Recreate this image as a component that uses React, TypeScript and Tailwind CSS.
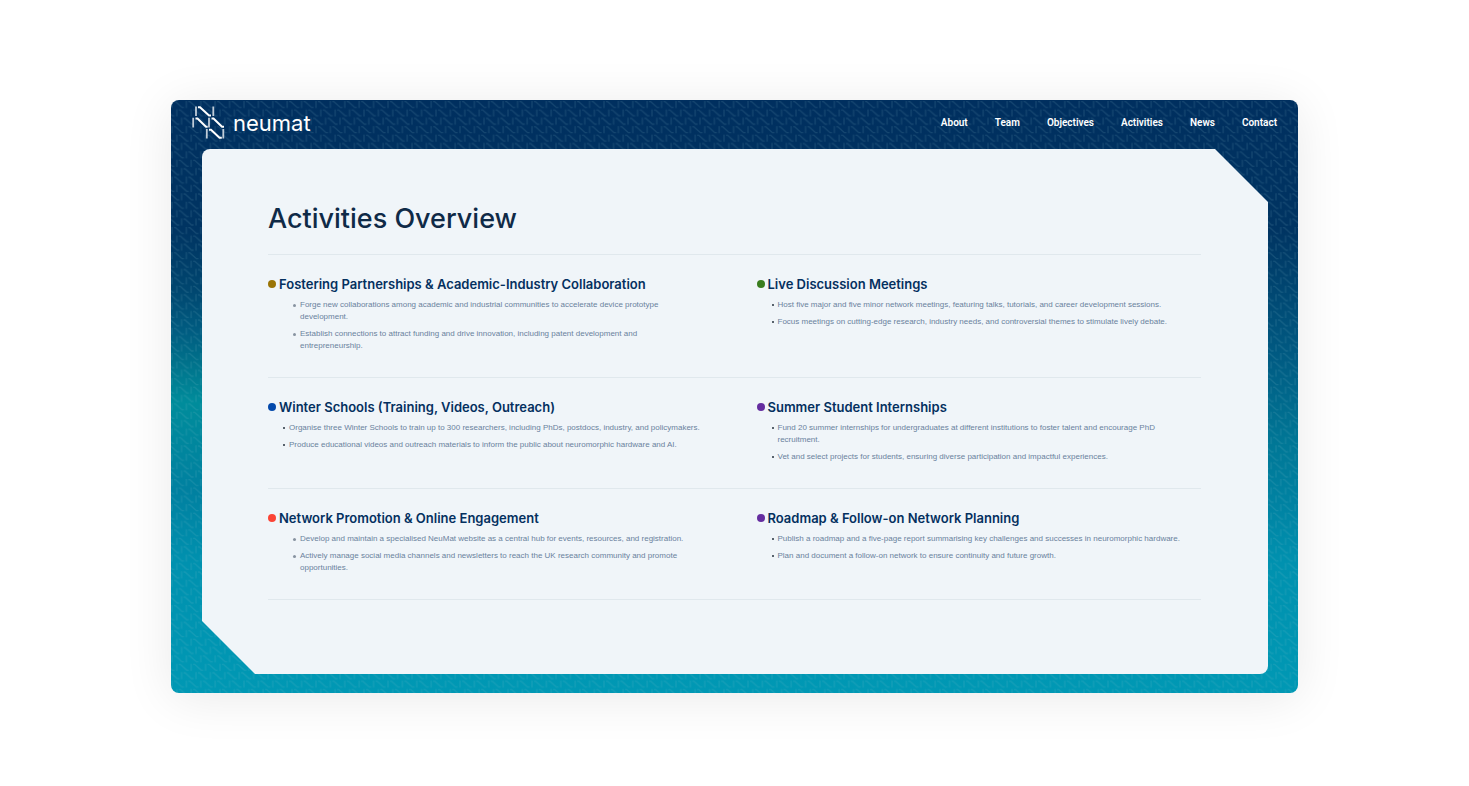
import clsx from "clsx"

const links = ["About", "Team", "Objectives", "Activities", "News", "Contact"]

const activities = [
  {
    title: "Fostering Partnerships & Academic-Industry Collaboration",
    dot: "bg-[#9a7406]",
    nested: true,
    items: [
      "Forge new collaborations among academic and industrial communities to accelerate device prototype development.",
      "Establish connections to attract funding and drive innovation, including patent development and entrepreneurship.",
    ],
  },
  {
    title: "Live Discussion Meetings",
    dot: "bg-[#3a7d1e]",
    items: [
      "Host five major and five minor network meetings, featuring talks, tutorials, and career development sessions.",
      "Focus meetings on cutting-edge research, industry needs, and controversial themes to stimulate lively debate.",
    ],
  },
  {
    title: "Winter Schools (Training, Videos, Outreach)",
    dot: "bg-[#0449ab]",
    items: [
      "Organise three Winter Schools to train up to 300 researchers, including PhDs, postdocs, industry, and policymakers.",
      "Produce educational videos and outreach materials to inform the public about neuromorphic hardware and AI.",
    ],
  },
  {
    title: "Summer Student Internships",
    dot: "bg-[#652da0]",
    items: [
      "Fund 20 summer internships for undergraduates at different institutions to foster talent and encourage PhD recruitment.",
      "Vet and select projects for students, ensuring diverse participation and impactful experiences.",
    ],
  },
  {
    title: "Network Promotion & Online Engagement",
    dot: "bg-[#fb4436]",
    nested: true,
    items: [
      "Develop and maintain a specialised NeuMat website as a central hub for events, resources, and registration.",
      "Actively manage social media channels and newsletters to reach the UK research community and promote opportunities.",
    ],
  },
  {
    title: "Roadmap & Follow-on Network Planning",
    dot: "bg-[#652da0]",
    items: [
      "Publish a roadmap and a five-page report summarising key challenges and successes in neuromorphic hardware.",
      "Plan and document a follow-on network to ensure continuity and future growth.",
    ],
  },
]

const rows = [activities.slice(0, 2), activities.slice(2, 4), activities.slice(4, 6)]

function Logo() {
  return (
    <a href="#" className="flex items-center gap-2 text-white">
      <svg width="33" height="33" viewBox="0 0 33 33" fill="none" stroke="currentColor" aria-hidden="true">
        {/* Bars */}
        <path
          d="M4 0.5V10M21.3 0.5V10M1.2 11.8V21.5M17 11.8V21.5M14.8 23V32.5M31.3 23V32.5"
          strokeWidth="1.8"
          opacity="0.75"
        />
        {/* Diagonals */}
        <path
          d="M6 1.2H8L17 9.4H19M3.5 12.5H5.5L14 20.8H15.7M19.5 12.5H21.5L30 20.8H32M17 23.7H19L27.5 31.8H29.8"
          strokeWidth="2"
        />
      </svg>
      <span className="text-[22px] leading-6">neumat</span>
    </a>
  )
}

function Pattern() {
  return (
    <svg className="absolute inset-0 h-full w-full" aria-hidden="true">
      <defs>
        <path id="n-mark" d="M1 1V8M3 1.6H4.5L11 7.4H13" />
        <pattern id="n-tile" width="14.4" height="25.2" patternUnits="userSpaceOnUse">
          <g fill="none" stroke="#8fc4cf" strokeWidth="1.3">
            {[0, 1, 2].map((row) => (
              <g key={row}>
                <use href="#n-mark" x={4.8 * row} y={8.4 * row} />
                <use href="#n-mark" x={4.8 * row - 14.4} y={8.4 * row} />
              </g>
            ))}
          </g>
        </pattern>
      </defs>
      <rect width="100%" height="100%" fill="url(#n-tile)" opacity="0.15" />
    </svg>
  )
}

export default function App() {
  return (
    <div className="min-h-screen bg-white px-[171px] pt-[100px] pb-[93px] font-['Inter',sans-serif]">
      <div className="relative overflow-hidden rounded-lg bg-[linear-gradient(180deg,#002f5f_0%,#003462_22%,#00466f_32%,#005c81_39%,#00708a_44%,#008c9b_51%,#0080a0_66%,#0091af_78%,#0098b4_100%),linear-gradient(180deg,#002f5f_0%,#003462_22%,#005a82_43%,#007796_58%,#0082a2_68%,#0091af_78%,#0098b4_100%)] bg-[length:50%_100%,100%_100%] bg-no-repeat shadow-[0_5px_50px_rgba(0,0,0,0.09)]">
        <Pattern />

        {/* Header */}
        <header className="relative flex h-[49px] items-center justify-between px-[21px] pb-1">
          <Logo />
          <nav className="flex gap-[27px] font-['Roboto',sans-serif]">
            {links.map((link) => (
              <a key={link} href="#" className="text-[10px] leading-4 font-semibold text-white">
                {link}
              </a>
            ))}
          </nav>
        </header>

        {/* Panel */}
        <main className="relative mr-[30px] mb-[19px] ml-[31px] rounded-lg bg-[#f0f5f9] pt-[52px] pr-[67px] pb-[74px] pl-[66px] [clip-path:polygon(0_0,calc(100%-53px)_0,100%_53px,100%_100%,53px_100%,0_calc(100%-53px))]">
          <h1 className="mb-[17px] text-[27px] leading-9 font-medium text-[#0f2a47]">Activities Overview</h1>

          <div className="divide-y divide-[#e0e8ed] border-y border-[#e0e8ed]">
            {rows.map((row, i) => (
              <div key={i} className="grid grid-cols-2 gap-11 pt-[21px] pb-[25px]">
                {row.map((activity) => (
                  <section key={activity.title}>
                    <h2 className="flex items-center gap-[3px] text-[13px] leading-4 font-semibold text-[#04305f]">
                      <span className={clsx("size-2 shrink-0 rounded-full", activity.dot)} />
                      {activity.title}
                    </h2>
                    <ul
                      className={clsx(
                        "mt-[7px] space-y-[5px] font-['Liberation_Sans',sans-serif] text-[8px] leading-3 text-[#6a829d]",
                        activity.nested ? "pr-4 pl-[25px]" : "pr-2 pl-[15px]"
                      )}
                    >
                      {activity.items.map((item) => (
                        <li key={item} className="flex gap-1">
                          <span
                            className={clsx(
                              "mt-[5px] shrink-0 rounded-full",
                              activity.nested ? "size-[3px] bg-[#8793a0]" : "size-[2px] bg-[#26313d]"
                            )}
                          />
                          {item}
                        </li>
                      ))}
                    </ul>
                  </section>
                ))}
              </div>
            ))}
          </div>
        </main>
      </div>
    </div>
  )
}
